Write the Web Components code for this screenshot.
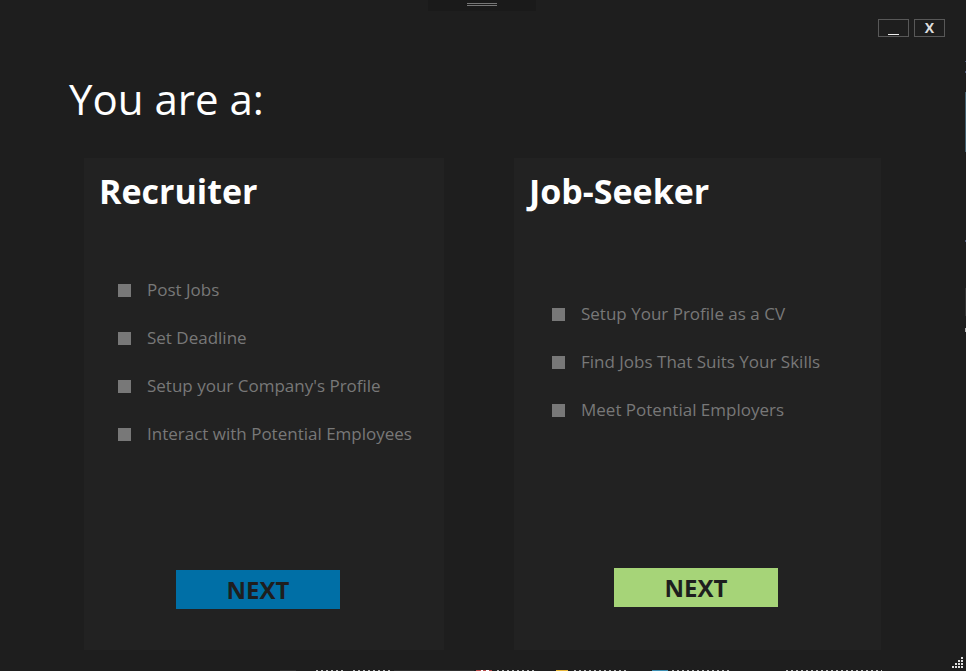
<!DOCTYPE html>
<html lang="en">
<head>
<meta charset="utf-8">
<title>You are a:</title>
<style>
html, body { margin: 0; min-height: 100%; background: #1e1e1e; }
body { font-family: "Open Sans", "Noto Sans", sans-serif; color: #fff; }
</style>
</head>
<body>
<app-window>
  <title-bar slot="bar"></title-bar>
  <h1 slot="heading">You are a:</h1>
  <role-card accent="blue">
    <span slot="title">Recruiter</span>
    <role-feature>Post Jobs</role-feature>
    <role-feature>Set Deadline</role-feature>
    <role-feature>Setup your Company's Profile</role-feature>
    <role-feature>Interact with Potential Employees</role-feature>
  </role-card>
  <role-card accent="green">
    <span slot="title">Job-Seeker</span>
    <role-feature>Setup Your Profile as a CV</role-feature>
    <role-feature>Find Jobs That Suits Your Skills</role-feature>
    <role-feature>Meet Potential Employers</role-feature>
  </role-card>
</app-window>
<script>
const define = (name, html) => {
  const template = document.createElement('template');
  template.innerHTML = html;
  customElements.define(name, class extends HTMLElement {
    constructor() {
      super();
      this.attachShadow({ mode: 'open' }).append(template.content.cloneNode(true));
    }
  });
};

define('app-window', `
<style>
:host { display: flex; flex-direction: column; position: relative; min-height: 100vh; box-sizing: border-box; padding-bottom: 21px; }
::slotted(h1) { margin: 31px 69px 29px; font-size: 42px; line-height: 60px; font-weight: 400; }
main { flex: 1; display: grid; grid-template-columns: 360fr 367fr; gap: 70px; padding: 0 85px 0 84px; }
.behind { position: absolute; left: 0; bottom: 0; width: 100%; height: 1px; }
.side { position: absolute; right: 0; top: 0; width: 1px; height: 100%; }
resize-grip { position: absolute; right: 2px; bottom: 2px; }
</style>
<slot name="bar"></slot>
<slot name="heading"></slot>
<main><slot></slot></main>
<svg class="behind" viewBox="0 0 966 1" preserveAspectRatio="none" shape-rendering="crispEdges" aria-hidden="true">
  <g fill="none" stroke="#b8b8b8" stroke-dasharray="2 3">
    <path d="M316 .5h28M353 .5h40M497 .5h38M574 .5h54M672 .5h60M786 .5h96"/>
  </g>
  <path d="M476 .5h16" stroke="#b84a4a"/><path d="M481 .5h2m3 0h3" stroke="#fff"/>
  <path d="M556 .5h12" stroke="#e8b83a"/><path d="M652 .5h16" stroke="#3d91b5"/>
  <path d="M280 .5h16M394 .5h80" stroke="#303030"/>
</svg>
<svg class="side" viewBox="0 0 1 671" preserveAspectRatio="none" shape-rendering="crispEdges" aria-hidden="true">
  <path d="M.5 92v60" stroke="#43606e"/>
  <path d="M.5 71v2M.5 240v2M.5 61v1" stroke="#4b5675"/>
  <path d="M.5 288v28" stroke="#343434"/><path d="M.5 328v4" stroke="#b0b0b0"/>
</svg>
<resize-grip></resize-grip>`);

define('title-bar', `
<style>
:host { display: grid; grid-template-columns: 1fr 108px 1fr; height: 38px; padding-right: 2px; }
.grip { display: flow-root; height: 11px; background: #1a1a1a; }
.grip svg { display: block; margin: 3px auto 0; }
.controls { display: flex; justify-content: flex-end; align-items: flex-start; gap: 5px; padding: 19px 19px 0 0; }
button { box-sizing: border-box; width: 31px; height: 18px; padding: 0; border: 1px solid #585858; background: none; color: #ddd; display: grid; place-items: center; font: 700 14px/14px "Open Sans", "Noto Sans", sans-serif; }
button svg { display: block; }
</style>
<span></span>
<div class="grip"><svg width="30" height="3" shape-rendering="crispEdges" aria-hidden="true"><path d="M0 .5h30M0 2.5h30" stroke="#777"/></svg></div>
<div class="controls">
  <button type="button" aria-label="Minimize"><svg width="11" height="14" shape-rendering="crispEdges" aria-hidden="true"><path d="M0 13.5h11" stroke="#eee"/></svg></button>
  <button type="button" aria-label="Close">X</button>
</div>`);

define('role-card', `
<style>
:host { display: flex; flex-direction: column; box-sizing: border-box; background: #222; --accent: #006fa6; --list-top: 63px; --list-inset: 34px; --action-left: 92px; --action-bottom: 41px; }
:host([accent="green"]) { --accent: #a6d478; --list-top: 87px; --list-inset: 38px; --action-left: 100px; --action-bottom: 43px; }
h2 { margin: 9px 15px 0; font-size: 34px; line-height: 48px; font-weight: 700; }
.list { display: flex; flex-direction: column; gap: 24px; padding: var(--list-top) 0 0 var(--list-inset); }
button { width: 164px; height: 39px; padding: 0; border: 0; margin: auto 0 var(--action-bottom) var(--action-left); background: var(--accent); color: #1e1e1e; font: 700 24px/38px "Open Sans", "Noto Sans", sans-serif; }
</style>
<h2><slot name="title"></slot></h2>
<div class="list" role="list"><slot></slot></div>
<button type="button">NEXT</button>`);

define('role-feature', `
<style>
:host { display: flex; align-items: center; gap: 16px; color: #787878; font-size: 17px; line-height: 24px; white-space: nowrap; }
i { width: 13px; height: 13px; background: #787878; }
</style>
<i></i><span role="listitem"><slot></slot></span>`);

define('resize-grip', `
<style>:host, svg { display: block; }</style>
<svg width="12" height="12" shape-rendering="crispEdges" aria-hidden="true">
  <path fill="#e0e0e0" d="M9 0h2v2h-2zM6 3h2v2H6zM9 3h2v2H9zM3 6h2v2H3zM6 6h2v2H6zM9 6h2v2H9zM0 9h2v2H0zM3 9h2v2H3zM6 9h2v2H6zM9 9h2v2H9z"/>
</svg>`);
</script>
</body>
</html>
